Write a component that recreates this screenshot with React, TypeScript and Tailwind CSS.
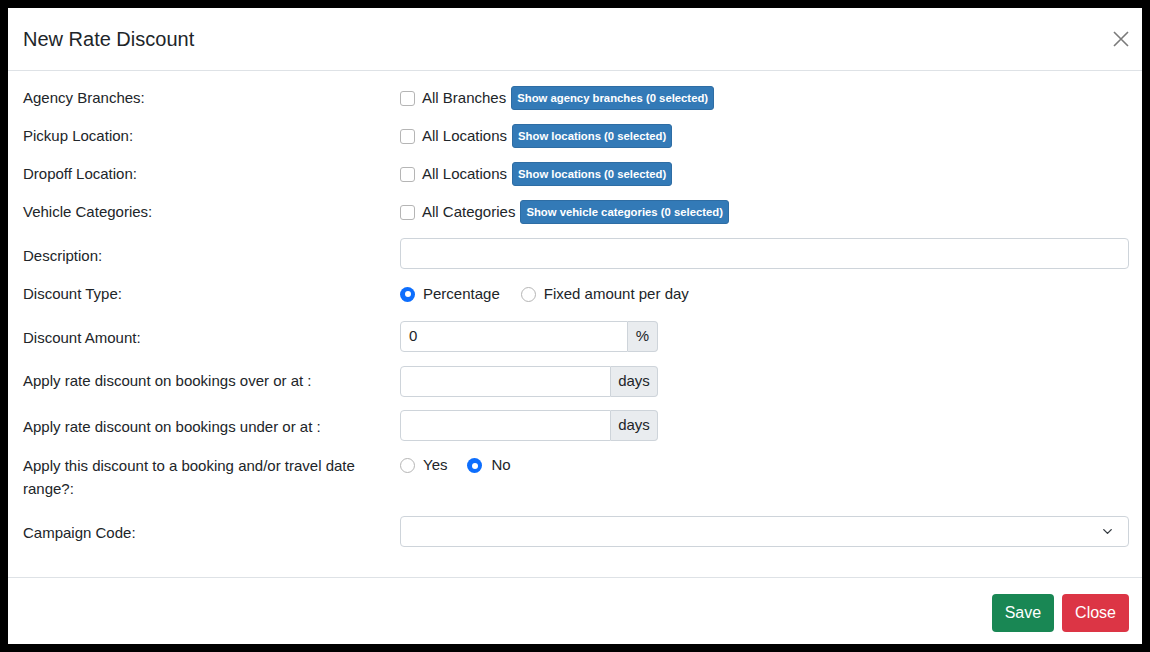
import { ChevronDown } from 'lucide-react';

const font = { fontFamily: '"Liberation Sans", Arial, sans-serif' };

const Checkbox = () => (
  <span className="inline-block w-[15px] h-[15px] border border-[#b5b5b5] rounded-[3px] bg-white shrink-0" />
);

const Radio = ({ checked }: { checked?: boolean }) =>
  checked ? (
    <span className="inline-flex items-center justify-center w-[15px] h-[15px] rounded-full bg-[#0d6efd] shrink-0">
      <span className="w-[6px] h-[6px] rounded-full bg-white" />
    </span>
  ) : (
    <span className="inline-block w-[15px] h-[15px] rounded-full border border-[#b5b5b5] bg-white shrink-0" />
  );

const Badge = ({ children }: { children: React.ReactNode }) => (
  <span className="inline-flex items-center h-[24px] px-[5px] ml-[5px] rounded-[3px] bg-[#337ab7] border border-[#2e6da4] text-white font-bold text-[11.3px] whitespace-nowrap">
    {children}
  </span>
);

const CheckRow = ({ label, text, badge }: { label: string; text: string; badge: string }) => (
  <div className="flex items-center h-[38px]">
    <div className="w-[377px] shrink-0">{label}</div>
    <div className="flex items-center">
      <Checkbox />
      <span className="ml-[7px]">{text}</span>
      <Badge>{badge}</Badge>
    </div>
  </div>
);

const InputGroup = ({ value, addon, addonWidth }: { value?: string; addon: string; addonWidth: string }) => (
  <div className="flex h-[31px] w-[258px]">
    <div className="flex-1 flex items-center border border-[#ced4da] rounded-l-[4px] px-[8px] text-[15px]">
      {value}
    </div>
    <div
      className={`flex items-center justify-center ${addonWidth} border border-l-0 border-[#ced4da] bg-[#e9ecef] rounded-r-[4px] text-[15px]`}
    >
      {addon}
    </div>
  </div>
);

export default function App() {
  return (
    <div className="h-[652px] w-[1150px] bg-black p-[8px]" style={font}>
      <div className="h-full w-full bg-white flex flex-col text-[#212529] text-[15px]">
        {/* header */}
        <div className="h-[63px] shrink-0 flex items-center justify-between pl-[15px] pr-[13px] border-b border-[#dee2e6]">
          <h1 className="text-[20px] leading-none">New Rate Discount</h1>
          <svg width="16" height="16" viewBox="0 0 16 16" className="text-[#7a7a7a]">
            <path d="M1 1L15 15M15 1L1 15" stroke="currentColor" strokeWidth="1.6" fill="none" />
          </svg>
        </div>

        {/* body */}
        <div className="flex-1 pl-[15px] pr-[13px] pt-[8px]">
          <CheckRow label="Agency Branches:" text="All Branches" badge="Show agency branches (0 selected)" />
          <CheckRow label="Pickup Location:" text="All Locations" badge="Show locations (0 selected)" />
          <CheckRow label="Dropoff Location:" text="All Locations" badge="Show locations (0 selected)" />
          <CheckRow label="Vehicle Categories:" text="All Categories" badge="Show vehicle categories (0 selected)" />

          <div className="flex items-center h-[31px] mt-[7px]">
            <div className="w-[377px] shrink-0 pt-[5px]">Description:</div>
            <div className="flex-1 h-full border border-[#ced4da] rounded-[4px]" />
          </div>

          <div className="flex items-center h-[28px] mt-[11px]">
            <div className="w-[377px] shrink-0">Discount Type:</div>
            <div className="flex items-center">
              <Radio checked />
              <span className="ml-[8px] mr-[21px]">Percentage</span>
              <Radio />
              <span className="ml-[8px]">Fixed amount per day</span>
            </div>
          </div>

          <div className="flex items-center h-[31px] mt-[13px]">
            <div className="w-[377px] shrink-0 pt-[3px]">Discount Amount:</div>
            <InputGroup value="0" addon="%" addonWidth="w-[30px]" />
          </div>

          <div className="flex items-center h-[31px] mt-[14px]">
            <div className="w-[377px] shrink-0">Apply rate discount on bookings over or at :</div>
            <InputGroup addon="days" addonWidth="w-[47px]" />
          </div>

          <div className="flex items-center h-[31px] mt-[13px]">
            <div className="w-[377px] shrink-0 pt-[3px]">Apply rate discount on bookings under or at :</div>
            <InputGroup addon="days" addonWidth="w-[47px]" />
          </div>

          <div className="flex items-start mt-[13px]">
            <div className="w-[377px] shrink-0 leading-[23px] pr-[20px]">
              Apply this discount to a booking and/or travel date range?:
            </div>
            <div className="flex items-center h-[23px]">
              <Radio />
              <span className="ml-[8px] mr-[20px]">Yes</span>
              <Radio checked />
              <span className="ml-[9px]">No</span>
            </div>
          </div>

          <div className="flex items-center h-[31px] mt-[16px]">
            <div className="w-[377px] shrink-0 pt-[3px]">Campaign Code:</div>
            <div className="flex-1 h-full border border-[#ced4da] rounded-[4px] flex items-center justify-end pr-[13px]">
              <ChevronDown className="w-[15px] h-[15px] text-[#343a40]" strokeWidth={2.2} />
            </div>
          </div>
        </div>

        {/* footer */}
        <div className="h-[67px] shrink-0 border-t border-[#dee2e6] flex items-start justify-end pt-[16px] pr-[13px] gap-[8px]">
          <button className="h-[38px] px-[13px] rounded-[4px] bg-[#198754] text-white text-[16px]">Save</button>
          <button className="h-[38px] px-[13px] rounded-[4px] bg-[#dc3545] text-white text-[16px]">Close</button>
        </div>
      </div>
    </div>
  );
}
